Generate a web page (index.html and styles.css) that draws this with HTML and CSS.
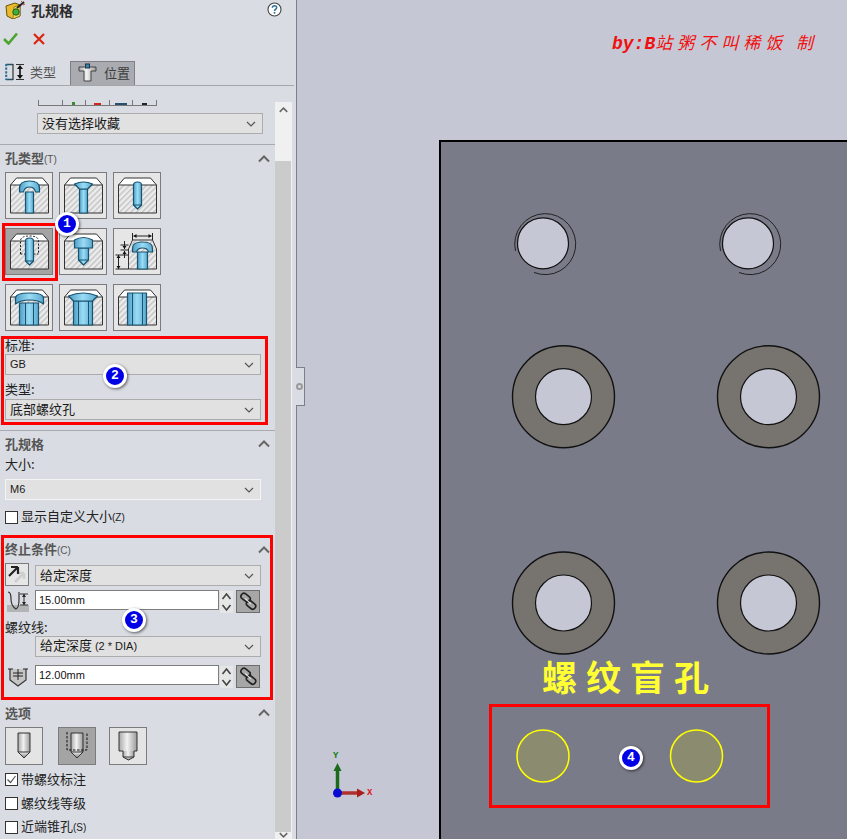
FILE: index.html
```html
<!DOCTYPE html>
<html lang="zh">
<head>
<meta charset="utf-8">
<title>孔规格</title>
<link rel="stylesheet" href="styles.css">
</head>
<body>
<svg class="defs" width="0" height="0" aria-hidden="true">
  <defs>
    <pattern id="hatch" width="4" height="4" patternUnits="userSpaceOnUse" patternTransform="rotate(-45)">
      <rect width="4" height="4" fill="#ececec"/>
      <rect width="4" height="1.400" fill="#c2c2c2"/>
    </pattern>
    <linearGradient id="metal" x1="0" x2="1" y1="0" y2="0">
      <stop offset="0" stop-color="#a8a8a8"/><stop offset=".45" stop-color="#f2f2f2"/><stop offset="1" stop-color="#9a9a9a"/>
    </linearGradient>
    <linearGradient id="sink" x1="0" x2="0" y1="0" y2="1">
      <stop offset="0" stop-color="#f0f0f0"/><stop offset="1" stop-color="#7b7b7b"/>
    </linearGradient>
    <linearGradient id="bore" x1="0" x2="1" y1="0" y2="0">
      <stop offset="0" stop-color="#4f9fc6"/><stop offset=".5" stop-color="#9adcf6"/><stop offset="1" stop-color="#5aa8cd"/>
    </linearGradient>
    <symbol id="block" viewBox="0 0 47 47">
      <path d="M5 13 11 6H37L43 13V41H5Z" fill="url(#hatch)"/>
      <path d="M5 13 11 6H37L43 13Z" fill="#fff"/>
      <path d="M5 41V13H43V41H5M5 13 11 6H37L43 13" fill="none" stroke="#333" stroke-width="1"/>
    </symbol>
    <symbol id="chev" viewBox="0 0 10 6"><path d="M1 1 5 5 9 1" fill="none" stroke="#555" stroke-width="1.200"/></symbol>
    <symbol id="up" viewBox="0 0 12 8"><path d="M1 6.500 6 1.500 11 6.500" fill="none" stroke="#666" stroke-width="2"/></symbol>
    <symbol id="link" viewBox="0 0 24 23">
      <g fill="none" stroke="#222" stroke-width="1.800">
        <rect x="4" y="4" width="11" height="6.500" rx="3.200" transform="rotate(38 9.500 7)"/>
        <rect x="10" y="12" width="11" height="6.500" rx="3.200" transform="rotate(38 15.500 15)"/>
        <path d="M9 8 15 14" stroke="#e8e8e8" stroke-width="1.200"/>
      </g>
    </symbol>
    <symbol id="spin" viewBox="0 0 12 22"><path d="M2 8 6 3 10 8M2 14 6 19 10 14" fill="none" stroke="#444" stroke-width="1.600"/></symbol>
  </defs>
</svg>

<div class="app">
  <aside class="panel">
    <header class="title-bar">
      <svg class="title-icon" width="20" height="18" viewBox="0 0 20 18">
        <path d="M1 5 10 2 15 4V15L8 18 2 15Z" fill="#e9bb2c" stroke="#6a5310"/>
        <path d="M9 6 15 4V15L8 18Z" fill="#f6d65c" stroke="#6a5310" stroke-width=".6"/>
        <circle cx="11" cy="11" r="3.200" fill="#3fae3a" stroke="#1f5f1d"/>
        <path d="M12 7 19 1" stroke="#222" stroke-width="2"/>
        <path d="M16 1 17 0M18 4 20 3" stroke="#d33" stroke-width="1"/>
      </svg>
      <strong class="title-text">孔规格</strong>
      <svg class="help" width="15" height="15" viewBox="0 0 15 15">
        <circle cx="7.500" cy="7.500" r="6.500" fill="#fff" stroke="#444" stroke-width="1.100"/>
        <path d="M5.300 5.800C5.400 3 9.700 3 9.700 5.600 9.700 7.300 7.500 7.300 7.500 9" fill="none" stroke="#2a6d99" stroke-width="1.500"/>
        <rect x="6.700" y="10" width="1.600" height="1.700" fill="#2a6d99"/>
      </svg>
    </header>
    <div class="actions">
      <svg width="15" height="13" viewBox="0 0 15 13"><path d="M1 7 5.500 11.500 14 1.500" fill="none" stroke="#4aa52e" stroke-width="2.600"/></svg>
      <svg width="12" height="12" viewBox="0 0 12 12"><path d="M1 1 11 11M11 1 1 11" fill="none" stroke="#d9260f" stroke-width="2.200"/></svg>
    </div>
    <nav class="tabs">
      <div class="tab">
        <svg width="19" height="18" viewBox="0 0 19 18">
          <path d="M1 1.500H8M1 16.500H8" stroke="#27506e" stroke-width="1.400"/>
          <path d="M1.200 1V17" stroke="#2a6d99" stroke-width="2" stroke-dasharray="2.200 1.400"/>
          <path d="M8 1V17" stroke="#333" stroke-width="1.200"/>
          <path d="M11 1.500H19M11 16.500H19" stroke="#333" stroke-width="1.200"/>
          <path d="M15 3V15" stroke="#111" stroke-width="1.600"/>
          <path d="M12 6 15 2 18 6ZM12 12 15 16 18 12Z" fill="#111"/>
        </svg>
        <span>类型</span>
      </div>
      <div class="tab tab-off">
        <svg width="19" height="19" viewBox="0 0 19 19">
          <path d="M1 4H18V8H13V18H6V8H1Z" fill="url(#metal)" stroke="#444"/>
          <rect x="7.500" y="1" width="4" height="4" fill="#3b86ad" stroke="#234"/>
        </svg>
        <span>位置</span>
      </div>
    </nav>

    <div class="scroller">
      <div class="content">
        <div class="stub">
          <i></i><i class="g"></i><i class="r"></i><i class="b"></i><i class="k"></i>
        </div>
        <div class="select fav"><span>没有选择收藏</span><svg class="chevron"><use href="#chev"/></svg></div>

        <section class="group">
          <div class="group-head"><span>孔类型<small>(T)</small></span><svg class="collapse"><use href="#up"/></svg></div>
          <div class="hole-grid">
            <div class="tile"><svg viewBox="0 0 47 47"><use href="#block"/>
              <path class="hole" d="M20 20H28V41H20Z"/><path class="hole" d="M14 20V16Q14 9 24 9T34 16V20H30Q29 15 24 15T18 20Z"/></svg></div>
            <div class="tile"><svg viewBox="0 0 47 47"><use href="#block"/>
              <path class="hole" d="M20 17H28V41H20Z"/><path class="hole" d="M15 12Q24 8 33 12L28 17H20Z"/></svg></div>
            <div class="tile"><svg viewBox="0 0 47 47"><use href="#block"/>
              <path class="hole" d="M20 13Q20 10 24 10T28 13V33L24 37 20 33Z"/><path class="tip" d="M20 33H28"/></svg></div>
            <div class="tile on"><svg viewBox="0 0 47 47"><use href="#block"/>
              <path class="dash" d="M15 26V13Q15 8 24 8T33 13V26"/><path class="dash" d="M15 26H20M28 26H33"/>
              <path class="hole" d="M20 13Q20 10 24 10T28 13V33L24 37 20 33Z"/><path class="tip" d="M20 33H28"/></svg></div>
            <div class="tile"><svg viewBox="0 0 47 47"><use href="#block"/>
              <path class="hole" d="M19 20H29V32L24 37 19 32Z"/><path class="hole" d="M15 12Q24 7 33 12V20H15Z"/><path class="tip" d="M19 32H29"/></svg></div>
            <div class="tile"><svg viewBox="0 0 47 47">
              <path d="M15 24 19 13H39L43 24V41H15Z" fill="url(#hatch)"/>
              <path d="M15 41V21L19 12H39L43 21V41Z" fill="none" stroke="#333"/>
              <path class="hole" d="M24 24H34V41H24Z"/><path class="hole" d="M19 24V20Q19 14 29 14T39 20V24H35Q34 20 29 20T23 24Z"/>
              <g stroke="#222" fill="none"><path d="M19 5V12M39 5V12M20 8H38M7 17H15M7 22H15M2 27H15M2 41H15M11 13V21M5 27V41M11 23V30"/></g>
              <g fill="#111"><path d="M20 8 23 6V10ZM38 8 35 6V10ZM11 21 9 18H13ZM11 23 9 26H13ZM5 27 3 30H7ZM5 41 3 38H7Z"/></g>
            </svg></div>
            <div class="tile"><svg viewBox="0 0 47 47"><use href="#block"/>
              <path class="hole" d="M14 19H33V41H14Z"/><path class="tip" d="M20 19V41M28 19V41"/><path class="hole" d="M10 14Q10 9 24 9T38 14V20Q33 16 24 16T10 20Z"/></svg></div>
            <div class="tile"><svg viewBox="0 0 47 47"><use href="#block"/>
              <path class="hole" d="M14 17H33V41H14Z"/><path class="tip" d="M19 17V41M29 17V41"/><path class="hole" d="M9 12Q24 6 38 12L33 17H14Z"/></svg></div>
            <div class="tile"><svg viewBox="0 0 47 47"><use href="#block"/>
              <path class="hole" d="M14 9H33V41H14Z"/><path class="tip" d="M19 9V41M29 9V41"/></svg></div>
          </div>
          <label class="field-label first">标准:</label>
          <div class="select wide"><span class="lat">GB</span><svg class="chevron"><use href="#chev"/></svg></div>
          <label class="field-label">类型:</label>
          <div class="select wide tight"><span>底部螺纹孔</span><svg class="chevron"><use href="#chev"/></svg></div>
        </section>

        <section class="group spec">
          <div class="group-head"><span>孔规格</span><svg class="collapse"><use href="#up"/></svg></div>
          <label class="field-label bare">大小:</label>
          <div class="select wide pale"><span class="lat">M6</span><svg class="chevron"><use href="#chev"/></svg></div>
          <div class="check first-check"><i class="box"></i><span>显示自定义大小<small>(Z)</small></span></div>
        </section>

        <section class="group end">
          <div class="group-head"><span>终止条件<small>(C)</small></span><svg class="collapse"><use href="#up"/></svg></div>
          <div class="row first-row">
            <div class="flip"><svg width="22" height="21" viewBox="0 0 22 21">
              <path d="M9 18 18 9M18 9V15M18 9H12" fill="none" stroke="#cfcfcf" stroke-width="2.500"/>
              <path d="M3 12 12 3M12 3H5M12 3V10" fill="none" stroke="#222" stroke-width="2.200"/></svg></div>
            <div class="select grow"><span>给定深度</span><svg class="chevron"><use href="#chev"/></svg></div>
          </div>
          <div class="row value">
            <svg class="dim" width="22" height="21" viewBox="0 0 22 21">
              <path d="M0 14H22V21H0Z" fill="#9a9a9a" opacity=".6"/>
              <path d="M1 1Q4 1 4 8T9 18Q12 17 12 8V1" fill="none" stroke="#333" stroke-width="1.200"/>
              <path d="M13 3H21M13 14H21M17 3V14" stroke="#333"/><path d="M15 6 17 3 19 6ZM15 11 17 14 19 11Z" fill="#222"/>
            </svg>
            <input class="num" value="15.00mm" readonly>
            <svg class="spin"><use href="#spin"/></svg>
            <div class="linkbtn"><svg><use href="#link"/></svg></div>
          </div>
          <label class="field-label thread">螺纹线:</label>
          <div class="row indent"><div class="select grow"><span>给定深度 <span class="lat">(2 * DIA)</span></span><svg class="chevron"><use href="#chev"/></svg></div></div>
          <div class="row value second">
            <svg class="dim" width="22" height="21" viewBox="0 0 22 21">
              <path d="M3 3V14L11 20 19 14V3" fill="#c5c5c5" stroke="#333" stroke-width="1.200"/>
              <path d="M1 3H6M16 3H21M6 7H16M6 10H16M11 3V14" stroke="#222"/>
            </svg>
            <input class="num" value="12.00mm" readonly>
            <svg class="spin"><use href="#spin"/></svg>
            <div class="linkbtn"><svg><use href="#link"/></svg></div>
          </div>
        </section>

        <section class="group opts">
          <div class="group-head"><span>选项</span><svg class="collapse"><use href="#up"/></svg></div>
          <div class="opt-row">
            <div class="opt"><svg viewBox="0 0 38 38">
              <path d="M13 6H25V25H13Z" fill="url(#metal)"/><path d="M13 25H25L19 31Z" fill="url(#sink)"/>
              <path d="M13 25V6H25V25L19 31 13 25H25" fill="none" stroke="#333"/></svg></div>
            <div class="opt on"><svg viewBox="0 0 38 38">
              <path d="M13 6H25V25H13Z" fill="url(#metal)"/><path d="M13 25H25L19 31Z" fill="url(#sink)"/>
              <path d="M13 25V6H25V25L19 31 13 25H25" fill="none" stroke="#333"/>
              <path d="M9 5V23H29V5" fill="none" stroke="#111" stroke-dasharray="2.500 1.500"/></svg></div>
            <div class="opt"><svg viewBox="0 0 38 38">
              <path d="M10 5H28V24H10Z" fill="url(#metal)"/><path d="M14 24H25V30H14Z" fill="url(#metal)"/><path d="M14 30H25L19.500 33Z" fill="url(#sink)"/>
              <path d="M10 5H28V24H25V30L19.500 33 14 30V24H10ZM14 30H25" fill="none" stroke="#333"/></svg></div>
          </div>
          <div class="check c-a"><i class="box"><svg width="11" height="11" viewBox="0 0 11 11"><path d="M1.500 5.500 4.500 8.500 9.500 2" fill="none" stroke="#555" stroke-width="1.200"/></svg></i><span>带螺纹标注</span></div>
          <div class="check c-b"><i class="box"></i><span>螺纹线等级</span></div>
          <div class="check c-b"><i class="box"></i><span>近端锥孔<small>(S)</small></span></div>
        </section>
      </div>

      <div class="scrollbar">
        <svg class="sb-arrow"><use href="#up"/></svg>
        <div class="sb-thumb"></div>
        <svg class="sb-arrow flipv"><use href="#up"/></svg>
      </div>
    </div>
  </aside>

  <main class="viewport">
    <svg class="scene" viewBox="-1 0 550 839" width="550" height="839">
      <rect x="142" y="141" width="420" height="720" fill="#797c88" stroke="#000" stroke-width="2"/>
      <g fill="#c5c8d4" stroke="#111" stroke-width="1.200">
        <circle cx="245" cy="243.300" r="25.500"/><circle cx="450" cy="243.300" r="25.500"/>
      </g>
      <g fill="none" stroke="#222" stroke-width="1">
        <path d="M217.500 251A30.500 30.500 0 1 1 236 272.500"/>
        <path d="M422.500 251A30.500 30.500 0 1 1 441 272.500"/>
      </g>
      <g fill="#777470" stroke="#111" stroke-width="1.400">
        <circle cx="265.500" cy="396.700" r="51"/><circle cx="470.500" cy="396.700" r="51"/>
        <circle cx="265.500" cy="603" r="51"/><circle cx="470.500" cy="603" r="51"/>
      </g>
      <g fill="#c5c8d4" stroke="#111" stroke-width="1.200">
        <circle cx="265.500" cy="396.700" r="28"/><circle cx="470.500" cy="396.700" r="28"/>
        <circle cx="265.500" cy="603" r="28"/><circle cx="470.500" cy="603" r="28"/>
      </g>
      <g fill="#8b8b70" stroke="#ffff00" stroke-width="1.500">
        <circle cx="245" cy="756" r="26"/><circle cx="398.500" cy="756" r="26"/>
      </g>
      <g>
        <path d="M39.500 793V771" stroke="#1c6b1c" stroke-width="3.500"/>
        <path d="M39.500 763 43.500 771H35.500Z" fill="#1c6b1c"/>
        <path d="M39.500 793H60" stroke="#b03030" stroke-width="3.500"/>
        <path d="M67 793 59 788.500V797.500Z" fill="#a81c1c"/>
        <circle cx="39.500" cy="793" r="4.500" fill="#0a0ad0"/>
      </g>
    </svg>
    <span class="axis axis-y">Y</span>
    <span class="axis axis-x">X</span>
    <span class="credit"><span class="credit-lat">by:B</span>站粥不叫稀饭 制</span>
    <span class="heading">螺纹盲孔</span>
  </main>

  <div class="splitter"><i></i></div>
  <div class="mark m1"></div>
  <div class="mark m2"></div>
  <div class="mark m3"></div>
  <div class="mark m4"></div>
  <b class="badge b1">1</b>
  <b class="badge b2">2</b>
  <b class="badge b3">3</b>
  <b class="badge b4">4</b>
</div>
</body>
</html>
```

FILE: styles.css
```css
* { box-sizing: border-box; }
html, body { margin: 0; height: 100%; overflow: hidden; }
body {
  font-family: "Noto Sans CJK SC", "Liberation Sans", sans-serif;
  font-size: 13px;
  line-height: 14px;
  color: #1f1f1f;
  background: #c5c8d4;
}
.defs { position: absolute; }
.app { position: relative; display: flex; width: 847px; height: 839px; overflow: hidden; }

/* panel */
.panel {
  width: 297px;
  height: 839px;
  flex: none;
  display: flex;
  flex-direction: column;
  background: #d9dce2;
  border-right: 1px solid #7d7f84;
}
.title-bar { height: 21px; display: flex; align-items: center; padding: 0 0 2px 5px; }
.title-icon { flex: none; }
.title-text { margin-left: 6px; font-size: 14px; font-weight: 700; color: #2c2c2c; }
.help { margin-left: auto; margin-right: 14px; }
.actions { height: 40px; display: flex; align-items: center; gap: 15px; padding: 0 0 5px 3px; }
.tabs {
  height: 25px;
  display: flex;
  align-items: stretch;
  border-bottom: 1px solid #a4a6aa;
  margin-right: 2px;
}
.tab { width: 70px; display: flex; align-items: center; gap: 6px; padding: 0 0 2px 5px; color: #555; font-size: 13px; }
.tab-off {
  width: 65px;
  background: #a9abb0;
  border: 1px solid #7e8084;
  border-bottom: 0;
  padding-left: 7px;
  gap: 7px;
  color: #3c3c3c;
}
.scroller { flex: 1; min-height: 0; display: flex; padding-top: 14px; }
.content { width: 275px; flex: none; }

.stub { height: 6px; width: 119px; margin-left: 38px; display: flex; border: 1px solid #777; border-top: 0; }
.stub i { flex: 1; border-right: 1px solid #777; background-repeat: no-repeat; background-position: center bottom; background-size: 60% 3px; }
.stub i:last-child { border-right: 0; }
.stub .g { background-image: linear-gradient(#3a8a2a, #3a8a2a); background-size: 3px 3px; }
.stub .r { background-image: linear-gradient(#d3261a, #d3261a); background-size: 7px 2px; }
.stub .b { background-image: linear-gradient(#27506e, #27506e); background-size: 12px 2px; }
.stub .k { background-image: linear-gradient(#222, #222); background-size: 5px 2px; }

.select {
  height: 21px;
  display: flex;
  align-items: center;
  justify-content: space-between;
  background: #e1e1e1;
  border: 1px solid #acacac;
  padding: 0 6px 2px 4px;
  font-size: 13px;
  color: #1a1a1a;
}
.chevron { width: 10px; height: 6px; flex: none; margin-top: 2px; }
.fav { margin: 7px 0 0 37px; width: 226px; }
.wide { margin-left: 5px; width: 256px; }
.tight { margin-top: 3px; }
.pale { margin-top: 8px; border-color: #f4f4f4; }
.grow { flex: 1; min-width: 0; }
.lat { font-family: "Liberation Sans", sans-serif; font-size: 11px; }
small { font-family: "Liberation Sans", sans-serif; font-size: 10px; }

.group { border-top: 1px solid #a8aaae; margin-top: 10px; }
.group-head {
  height: 27px;
  display: flex;
  align-items: center;
  justify-content: space-between;
  padding: 0 4px 0 5px;
  color: #555;
  font-weight: 700;
  font-size: 13px;
}
.group-head small { font-weight: 400; }
.collapse { width: 12px; height: 8px; margin-right: 1px; }

.hole-grid { display: grid; grid-template-columns: repeat(3, 48px); grid-auto-rows: 47px; gap: 9px 6px; margin-left: 5px; }
.tile { border: 1px solid #7b7b7b; background: #e6e6e6; }
.tile svg { display: block; margin: -1px; width: 48px; height: 47px; }
.tile.on { background: #a4a4a4; }
.hole { fill: url(#bore); stroke: #17526e; stroke-width: 1.200; stroke-linejoin: round; }
.tip { fill: none; stroke: #17526e; stroke-width: 1; }
.dash { fill: none; stroke: #222; stroke-width: 1; stroke-dasharray: 2 1.500; }

.field-label { display: block; height: 14px; margin: 7px 0 2px 5px; color: #222; }
.field-label.first { margin-top: 7px; }
.field-label.bare { margin-top: 0; }
.spec .group-head { height: 26px; }

.check { display: flex; align-items: center; gap: 3px; margin-left: 5px; color: #222; height: 14px; }
.first-check { margin-top: 10px; }
.box {
  width: 13px;
  height: 13px;
  flex: none;
  display: flex;
  align-items: center;
  justify-content: center;
  background: #fff;
  border: 1px solid #333;
}
.end { margin-top: 12px; border-top-color: transparent; }
.end .group-head { height: 26px; }
.row { display: flex; align-items: center; }
.row .select { margin-left: 6px; margin-right: 14px; }
.first-row { height: 23px; align-items: flex-end; }
.flip {
  margin-left: 5px;
  width: 24px;
  height: 23px;
  background: #e6e6e6;
  border: 1px solid #7b7b7b;
  flex: none;
}
.flip svg { display: block; }
.value { height: 23px; margin-top: 4px; padding-left: 7px; }
.dim { flex: none; }
.num {
  width: 184px;
  height: 20px;
  margin: 0 0 3px 6px;
  padding: 0 3px;
  font: 11px "Liberation Sans", sans-serif;
  color: #111;
  background: #fff;
  border: 1px solid #7d7d7d;
  outline: 0;
}
.spin { width: 13px; height: 22px; margin-left: 1px; flex: none; background: #e6e6e6; }
.linkbtn { width: 24px; height: 23px; margin-left: 3px; background: #a6a6a6; border: 1px solid #6d6d6d; flex: none; }
.linkbtn svg { display: block; width: 22px; height: 21px; }
.thread { margin: 7px 0 2px 5px; }
.indent { padding-left: 29px; }
.second { margin-top: 8px; }

.opts { margin-top: 11px; border-top-color: transparent; }
.opts .group-head { padding-bottom: 2px; }
.opt-row { display: flex; margin-left: 5px; gap: 15px; }
.opt-row .opt:last-child { margin-left: -2px; }
.opt { width: 38px; height: 38px; border: 1px solid #7b7b7b; background: #e4e4e4; }
.opt svg { display: block; width: 38px; height: 38px; margin: -1px; }
.opt.on { background: #a4a4a4; }
.c-a { margin-top: 7px; }
.c-b { margin-top: 10px; }

/* scrollbar */
.scrollbar { width: 17px; flex: none; margin-top: 2px; display: flex; flex-direction: column; align-items: center; background: #f0f0f0; border-right: 1px solid #f2f3f5; }
.sb-arrow { width: 9px; height: 6px; margin: 5px 0 5px; flex: none; }
.sb-thumb { flex: none; width: 100%; height: 671px; margin-top: 43px; background: #cbcbcb; }
.flipv { transform: scaleY(-1); margin-top: 0; }

/* viewport */
.viewport { position: relative; flex: 1; background: #c5c8d4; overflow: hidden; }
.scene { position: absolute; left: 0; top: 0; display: block; }
.splitter {
  position: absolute;
  left: 296px;
  top: 367px;
  width: 9px;
  height: 39px;
  background: #d9dce2;
  border: 1px solid #7d7f84;
  border-left: 0;
  display: flex;
  align-items: center;
  justify-content: center;
}
.splitter i { width: 7px; height: 7px; border: 2px solid #9a9a9a; border-radius: 50%; margin-left: -1px; }
.axis { position: absolute; font: 700 9px "Liberation Mono", monospace; line-height: 9px; }
.axis-y { left: 36px; top: 752px; color: #0f7d0f; }
.axis-x { left: 70px; top: 789px; color: #e01010; }
.credit {
  position: absolute;
  left: 315px;
  top: 31px;
  font-size: 17px;
  font-style: italic;
  line-height: 22px;
  letter-spacing: 5px;
  color: #f01010;
  white-space: nowrap;
}
.credit-lat { font: italic 700 18px "Liberation Mono", monospace; letter-spacing: 0; }
.heading {
  position: absolute;
  left: 245px;
  top: 653px;
  font-size: 35px;
  font-weight: 700;
  line-height: 46px;
  letter-spacing: 9px;
  color: #ffff33;
  white-space: nowrap;
}

/* annotation overlays */
.mark { position: absolute; border: 3px solid #ff0000; pointer-events: none; }
.m1 { left: 2px; top: 223px; width: 56px; height: 58px; }
.m2 { left: 1px; top: 336px; width: 267px; height: 89px; }
.m3 { left: 1px; top: 535px; width: 272px; height: 165px; }
.m4 { left: 489px; top: 704px; width: 281px; height: 104px; }
.badge {
  position: absolute;
  width: 24px;
  height: 24px;
  border-radius: 50%;
  background: #0000e6;
  border: 3px solid #fff;
  box-shadow: 1px 1px 3px rgba(0, 0, 0, .6);
  color: #fff;
  font: 700 13px/18px "Liberation Mono", monospace;
  text-align: center;
}
.b1 { left: 55px; top: 212px; }
.b2 { left: 103px; top: 364px; }
.b3 { left: 122px; top: 608px; }
.b4 { left: 619px; top: 746px; }
```
